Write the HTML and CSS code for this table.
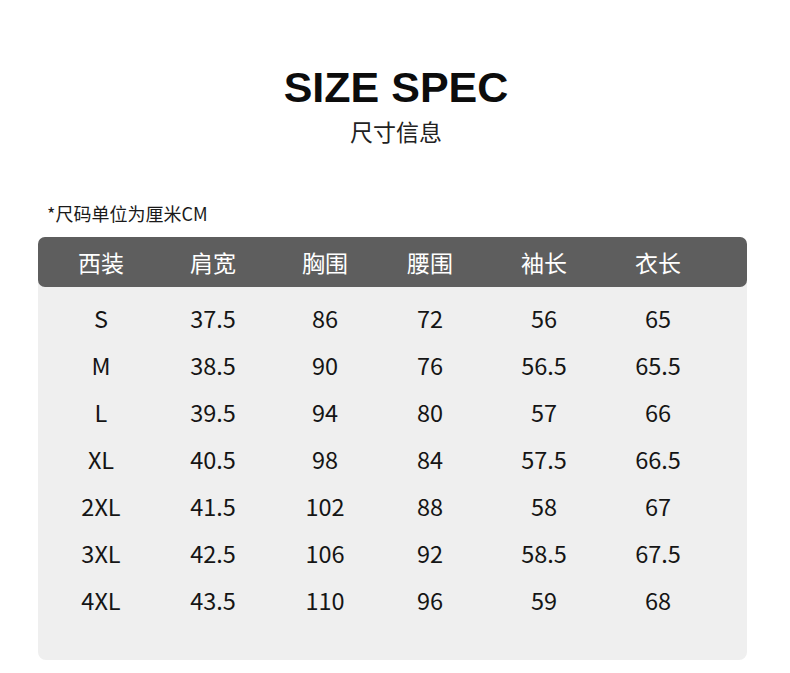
FILE: index.html
```html
<!DOCTYPE html>
<html lang="zh-CN">
<head>
<meta charset="utf-8">
<title>SIZE SPEC</title>
<link rel="stylesheet" href="styles.css">
</head>
<body>
<main class="page">
  <header class="heading">
    <h1 class="title">SIZE SPEC</h1>
    <p class="subtitle">尺寸信息</p>
  </header>
  <p class="note">*尺码单位为厘米CM</p>
  <section class="table">
    <div class="row head">
      <span>西装</span><span>肩宽</span><span>胸围</span><span>腰围</span><span>袖长</span><span>衣长</span>
    </div>
    <div class="body">
      <div class="row"><span>S</span><span>37.5</span><span>86</span><span>72</span><span>56</span><span>65</span></div>
      <div class="row"><span>M</span><span>38.5</span><span>90</span><span>76</span><span>56.5</span><span>65.5</span></div>
      <div class="row"><span>L</span><span>39.5</span><span>94</span><span>80</span><span>57</span><span>66</span></div>
      <div class="row"><span>XL</span><span>40.5</span><span>98</span><span>84</span><span>57.5</span><span>66.5</span></div>
      <div class="row"><span>2XL</span><span>41.5</span><span>102</span><span>88</span><span>58</span><span>67</span></div>
      <div class="row"><span>3XL</span><span>42.5</span><span>106</span><span>92</span><span>58.5</span><span>67.5</span></div>
      <div class="row"><span>4XL</span><span>43.5</span><span>110</span><span>96</span><span>59</span><span>68</span></div>
    </div>
  </section>
</main>
</body>
</html>
```

FILE: styles.css
```css
html, body {
  margin: 0;
  padding: 0;
  background: #ffffff;
}

body {
  font-family: "Noto Sans CJK SC", "Noto Sans", sans-serif;
  color: #1c1c1c;
}

.page {
  width: 790px;
  padding-top: 62px;
}

.heading {
  text-align: center;
  padding-left: 2px;
}

.title {
  margin: 0;
  font-family: "Liberation Sans", Arial, sans-serif;
  font-weight: 700;
  font-size: 43px;
  line-height: 50px;
  color: #0c0c0c;
}

.subtitle {
  margin: 4px 0 0;
  font-size: 23px;
  line-height: 30px;
  color: #222;
}

.note {
  margin: 57px 0 0 47px;
  font-size: 18px;
  line-height: 20px;
  color: #1a1a1a;
}

.table {
  margin: 14px 0 0 38px;
  width: 709px;
  background: #efefef;
  border-radius: 8px;
}

.row {
  display: grid;
  grid-template-columns: 112px 112px 112px 98px 130px 98px;
  padding-left: 7px;
  text-align: center;
}

.head {
  height: 50px;
  align-items: center;
  background: #5e5e5e;
  border-radius: 7px;
  color: #ffffff;
  font-size: 23px;
  line-height: 30px;
}

.body {
  padding: 7px 0 37px;
}

.body .row {
  height: 47px;
  align-items: center;
  font-size: 23.5px;
  line-height: 30px;
  color: #151515;
}
```
